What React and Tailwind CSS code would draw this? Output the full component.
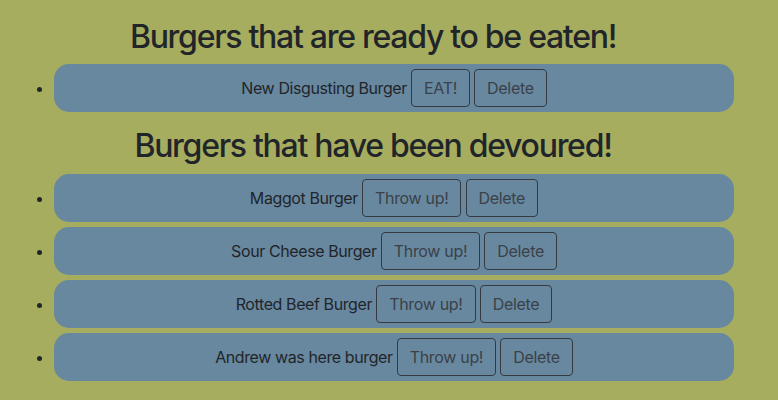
import React from "react";

const ready = ["New Disgusting Burger"];
const devoured = [
  "Maggot Burger",
  "Sour Cheese Burger",
  "Rotted Beef Burger",
  "Andrew was here burger",
];

const Btn = ({ children }) => (
  <button className="inline-block rounded-[4px] border border-[#343a40] px-3 py-[6px] text-base leading-6 tracking-[-0.02em] text-[#3a4148]">
    {children}
  </button>
);

const BurgerItem = ({ name, action }) => (
  <li className="rounded-[15px] bg-[#6888a0] py-[5px] text-center">
    {name} <Btn>{action}</Btn> <Btn>Delete</Btn>
  </li>
);

const App = () => {
  return (
    <div
      className="min-h-screen bg-[#a6ad5f] pt-[18px] text-base leading-6 tracking-[-0.025em] text-[#212529]"
      style={{ fontFamily: "Inter, 'Noto Sans', sans-serif" }}
    >
      <h2 className="mb-2 pr-[32px] text-center text-[32px] font-medium leading-[1.2] tracking-[-0.04em]">
        Burgers that are ready to be eaten!
      </h2>
      <ul className="mb-[15px] list-disc pl-[54px] pr-[44px]">
        {ready.map((b) => (
          <BurgerItem key={b} name={b} action="EAT!" />
        ))}
      </ul>
      <h2 className="mb-2 pr-[32px] text-center text-[32px] font-medium leading-[1.2] tracking-[-0.04em]">
        Burgers that have been devoured!
      </h2>
      <ul className="flex list-disc flex-col gap-[5px] pl-[54px] pr-[44px]">
        {devoured.map((b) => (
          <BurgerItem key={b} name={b} action="Throw up!" />
        ))}
      </ul>
    </div>
  );
};

export default App;
